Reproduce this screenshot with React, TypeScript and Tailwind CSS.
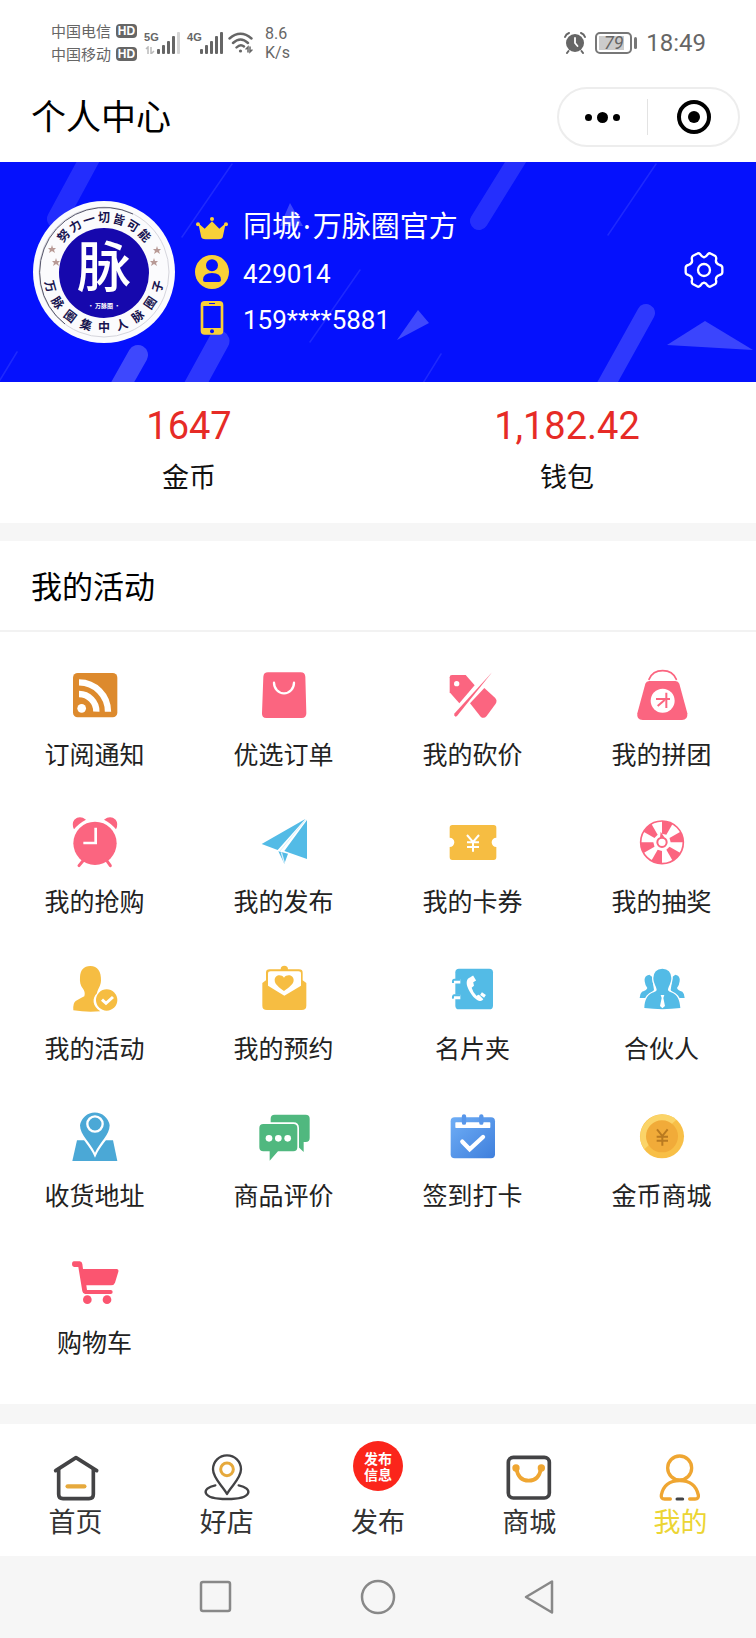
import type { ReactNode } from "react";

const PINK = "#fb6580";
const YELLOW = "#f6bd42";
const SKY = "#53bbe6";

type GlyphProps = { x: number; y: number; size?: number; children: ReactNode };

/* Icon canvas: three drawing units per pixel, with a free origin. */
function Glyph({ x, y, size = 56, children }: GlyphProps) {
  return (
    <svg width={size} height={size} viewBox={`${x} ${y} ${size * 3} ${size * 3}`} fill="none" aria-hidden="true" className="shrink-0">
      {children}
    </svg>
  );
}

function sector(cx: number, cy: number, r0: number, r1: number, a0: number, a1: number) {
  const p = (r: number, a: number) => {
    const t = (a * Math.PI) / 180;
    return `${(cx + r * Math.cos(t)).toFixed(1)} ${(cy + r * Math.sin(t)).toFixed(1)}`;
  };
  return `M${p(r0, a0)}L${p(r1, a0)}A${r1} ${r1} 0 0 1 ${p(r1, a1)}L${p(r0, a1)}Z`;
}

const RssIcon = (
  <Glyph x={200} y={51}>
    <rect x="218" y="69" width="133" height="133" rx="14" fill="#dd8a2d" />
    <circle cx="244" cy="175" r="13" fill="#fff" />
    <path d="M236 132A52 52 0 0 1 288 185M236 97A87 88 0 0 1 323 185" stroke="#fff" strokeWidth="19" />
  </Glyph>
);

const OrderIcon = (
  <Glyph x={766} y={51}>
    <path d="M802 67H900Q913 67 914 80L917 190Q917 204 903 204H797Q783 204 784 190L788 80Q789 67 802 67Z" fill={PINK} />
    <path d="M820 98A30 32 0 0 0 880 98" stroke="#fff" strokeWidth="7" strokeLinecap="round" />
  </Glyph>
);

const BargainIcon = (
  <Glyph x={200} y={51}>
    <path d="M214 82Q214 75 221 75H262L289 106L243 160L214 127Z" fill={PINK} />
    <circle cx="235" cy="101" r="8" fill="#fff" />
    <path d="M342 66L229 190Q225 198 232 200L236 198Z" fill={PINK} />
    <path d="M275 160L318 114L350 143Q358 151 352 161L325 198Q316 208 307 200Z" fill={PINK} />
  </Glyph>
);

const GroupIcon = (
  <Glyph x={766} y={51}>
    <path d="M811 88Q822 62 852 62Q882 62 893 88" stroke={PINK} strokeWidth="5" strokeLinecap="round" />
    <path d="M812 93H890Q899 93 902 101L926 190Q928 210 910 210H792Q773 210 776 190L800 101Q803 93 812 93Z" fill={PINK} />
    <circle cx="852" cy="152" r="36" fill="#fff" />
    <path d="M832 147H874M863 128V174M858 150L837 168" stroke={PINK} strokeWidth="6" />
  </Glyph>
);

const AlarmIcon = (
  <Glyph x={200} y={492}>
    <circle cx="284" cy="580" r="65" fill={PINK} />
    <path d="M221 538Q213 521 222 509Q238 495 257 509Q235 520 221 538ZM347 538Q355 521 346 509Q330 495 311 509Q333 520 347 538Z" fill={PINK} />
    <path d="M250 630L236 647M318 630L330 647" stroke={PINK} strokeWidth="9" strokeLinecap="round" />
    <path d="M286 533V579H249" stroke="#fff" strokeWidth="8" />
  </Glyph>
);

const PlaneIcon = (
  <Glyph x={766} y={492}>
    <path d="M783 582L914 507L831 600ZM919 510V627L851 603ZM833 604L862 611L851 641Z" fill={SKY} />
    <path d="M842 607L851 639" stroke="#d9f0fa" strokeWidth="4" />
    <path d="M915 509L838 603" stroke="#d9f0fa" strokeWidth="3" />
  </Glyph>
);

const CouponIcon = (
  <Glyph x={200} y={492}>
    <path d="M222 525H346Q354 525 354 533V563A14 14 0 0 0 354 591V621Q354 630 346 630H222Q214 630 214 621V591A14 14 0 0 0 214 563V533Q214 525 222 525Z" fill={YELLOW} />
    <path d="M266 555L284 576L302 555M284 576V605M266 577H302M266 591H302" stroke="#fff" strokeWidth="6" />
  </Glyph>
);

const WheelIcon = (
  <Glyph x={766} y={492}>
    <circle cx="850" cy="577" r="64" stroke={PINK} strokeWidth="5" />
    <g fill={PINK}>
      {[-120, -60, 0, 60, 120, 180].map((a) => (
        <path key={a} d={sector(850, 577, 26, 64, a - 30, a)} />
      ))}
    </g>
    <circle cx="850" cy="577" r="19" fill="#fff" />
    <path d="M846 545L858 563H844Z" fill={PINK} />
    <circle cx="850" cy="577" r="14" stroke={PINK} strokeWidth="6" />
  </Glyph>
);

const ActivityIcon = (
  <Glyph x={200} y={63}>
    <path
      d="M270 78C292 78 303 95 302 122C301 140 290 150 290 160C274 174 276 200 300 214Q260 218 219 211Q217 190 226 183Q240 175 252 169C255 158 252 152 248 146C240 138 238 125 239 112C240 90 250 78 270 78Z"
      fill={YELLOW}
    />
    <circle cx="319" cy="180" r="32" fill={YELLOW} />
    <path d="M305 179L317 190L338 171" stroke="#fff" strokeWidth="9" />
  </Glyph>
);

const ReserveIcon = (
  <Glyph x={766} y={63}>
    <circle cx="851" cy="88" r="11" fill={YELLOW} />
    <path d="M785 129L796 121V98Q796 88 807 88H895Q906 88 906 98V121L917 129V197Q917 210 903 210H799Q785 210 785 197Z" fill={YELLOW} />
    <path d="M802 101Q802 94 810 94H893Q901 94 901 101V137L851 167L802 137Z" fill="#fff" />
    <path d="M850 153C836 142 822 134 822 120C822 104 842 101 850 113C858 101 879 104 879 120C879 134 864 142 850 153Z" fill={YELLOW} />
  </Glyph>
);

const ContactsIcon = (
  <Glyph x={200} y={63}>
    <rect x="231" y="86" width="113" height="122" rx="11" fill={SKY} />
    <path d="M228 124H246M228 171H246" stroke="#fff" strokeWidth="13" />
    <path d="M246 119H227Q223 119 224 129M246 166H227Q223 166 224 176" stroke={SKY} strokeWidth="6" />
    <path d="M276 112C264 116 262 130 270 147C279 165 291 180 304 183Q311 184 315 178L302 164Q298 164 295 168Q284 158 280 143L287 137L282 115Z" fill="#fff" />
    <path d="M280 109L289 124M308 161L320 169" stroke="#fff" strokeWidth="10" />
  </Glyph>
);

const PartnerIcon = (
  <Glyph x={766} y={63}>
    <path d="M812 104Q796 106 798 124Q799 135 806 144Q803 152 790 155Q783 161 783 174H810L826 150L820 110ZM890 104Q905 106 903 124Q902 135 895 144Q898 152 911 155Q918 161 918 174H892L876 150L882 110Z" fill={SKY} />
    <path
      d="M851 86Q877 87 878 114C878 130 868 141 868 151C876 162 902 154 905 204Q851 211 797 204C800 154 826 162 834 151C834 141 824 130 824 114Q825 87 851 86Z"
      fill={SKY}
      stroke="#fff"
      strokeWidth="8"
      paintOrder="stroke"
    />
    <path d="M846 165H857L854 174L859 198L851 205L844 198L849 174Z" fill="#fff" />
  </Glyph>
);

const AddressIcon = (
  <Glyph x={200} y={504}>
    <path d="M230 601H338L351 663H216Z" fill="#4ba8d6" />
    <path d="M284 638C270 608 239 585 239 556A45 45 0 0 1 328 556C328 585 298 608 284 638Z" fill="#4ba8d6" stroke="#fff" strokeWidth="13" paintOrder="stroke" />
    <circle cx="284" cy="552" r="23" stroke="#fff" strokeWidth="7" />
  </Glyph>
);

const ReviewIcon = (
  <Glyph x={766} y={504}>
    <path d="M822 524H915Q927 524 927 536V594Q927 606 915 606H909V636L890 618V606H822Q810 606 810 594V536Q810 524 822 524Z" fill="#50b87f" />
    <path
      d="M788 552H878Q890 552 890 564V622Q890 634 878 634H832L807 662V634H788Q776 634 776 622V564Q776 552 788 552Z"
      fill="#50b87f"
      stroke="#fff"
      strokeWidth="10"
      paintOrder="stroke"
    />
    <circle cx="805" cy="595" r="10" fill="#fff" />
    <circle cx="833" cy="595" r="10" fill="#fff" />
    <circle cx="861" cy="595" r="10" fill="#fff" />
  </Glyph>
);

const CheckinIcon = (
  <Glyph x={200} y={504}>
    <defs>
      <linearGradient id="calendar" x1="0" y1="0" x2="1" y2="1">
        <stop offset="0" stopColor="#6faef6" />
        <stop offset="1" stopColor="#3f7fdc" />
      </linearGradient>
    </defs>
    <rect x="217" y="532" width="133" height="123" rx="12" fill="url(#calendar)" />
    <rect x="231" y="547" width="105" height="17" rx="2" fill="#fff" />
    <path d="M257 529V548M309 529V548" stroke="#5796ea" strokeWidth="13" strokeLinecap="round" />
    <path d="M252 605L274 628L314 591" stroke="#fff" strokeWidth="13" strokeLinecap="round" />
  </Glyph>
);

const CoinIcon = (
  <Glyph x={766} y={504}>
    <circle cx="850" cy="589" r="66" fill="#f8bf47" />
    <path d="M797 628A66 66 0 0 1 893 539Z" fill="#fbd468" />
    <circle cx="850" cy="589" r="48" fill="#f1ab39" />
    <path d="M835 568L851 588L867 568M851 588V617M834 590H868M834 602H868" stroke="#b97a20" strokeWidth="6" />
  </Glyph>
);

const CartIcon = (
  <Glyph x={200} y={75}>
    <path
      d="M221 94H238Q245 94 246 102L248 117H349Q356 118 354 125L344 158Q341 166 332 166H258L260 180H331Q337 180 337 186Q337 192 331 192H254Q248 192 246 184L234 111H221Q215 111 215 103Q215 94 221 94Z"
      fill="#fb5570"
    />
    <circle cx="261" cy="209" r="13" fill="#fb5570" />
    <circle cx="320" cy="209" r="13" fill="#fb5570" />
  </Glyph>
);

const features: { label: string; icon: ReactNode }[] = [
  { label: "订阅通知", icon: RssIcon },
  { label: "优选订单", icon: OrderIcon },
  { label: "我的砍价", icon: BargainIcon },
  { label: "我的拼团", icon: GroupIcon },
  { label: "我的抢购", icon: AlarmIcon },
  { label: "我的发布", icon: PlaneIcon },
  { label: "我的卡券", icon: CouponIcon },
  { label: "我的抽奖", icon: WheelIcon },
  { label: "我的活动", icon: ActivityIcon },
  { label: "我的预约", icon: ReserveIcon },
  { label: "名片夹", icon: ContactsIcon },
  { label: "合伙人", icon: PartnerIcon },
  { label: "收货地址", icon: AddressIcon },
  { label: "商品评价", icon: ReviewIcon },
  { label: "签到打卡", icon: CheckinIcon },
  { label: "金币商城", icon: CoinIcon },
  { label: "购物车", icon: CartIcon },
];

function Bars({ weak }: { weak?: boolean }) {
  return (
    <svg width="24" height="22" viewBox="0 0 24 22" fill="#666" aria-hidden="true">
      <rect x="0" y="17" width="3" height="5" rx="1" />
      <rect x="5" y="13" width="3" height="9" rx="1" />
      <rect x="10" y="9" width="3" height="13" rx="1" />
      <rect x="15" y="4" width="3" height="18" rx="1" />
      <rect x="20" y="0" width="3" height="22" rx="1" fill={weak ? "#d5d5d5" : "#666"} />
    </svg>
  );
}

function Carrier({ name }: { name: string }) {
  return (
    <div className="flex items-center gap-[5px]">
      <span>{name}</span>
      <span className="flex h-[14px] w-[21px] items-center justify-center rounded-[4px] bg-[#666] font-['Liberation_Sans',sans-serif] text-[12px] leading-none font-bold text-white">
        HD
      </span>
    </div>
  );
}

function StatusBar() {
  return (
    <div className="flex h-20 items-center justify-between pr-[50px] pl-[51px] text-[#666]">
      <div className="flex items-center pt-[6px]">
        <div className="pb-[2px] text-[15px] leading-[23px]">
          <Carrier name="中国电信" />
          <Carrier name="中国移动" />
        </div>
        <div className="ml-[7px] flex items-start">
          <div className="flex w-[13px] flex-col">
            <span className="font-['Liberation_Sans_Narrow','Liberation_Sans',sans-serif] text-[11px] leading-[11px] font-bold">5G</span>
            <svg width="12" height="8" viewBox="0 0 12 8" className="mt-[3px]" stroke="#bbb" strokeWidth="1.5" fill="none" aria-hidden="true">
              <path d="M2 3L4 1V8M10 5L7 8V1" />
            </svg>
          </div>
          <Bars weak />
        </div>
        <div className="ml-[6px] flex items-start">
          <span className="w-[13px] font-['Liberation_Sans_Narrow','Liberation_Sans',sans-serif] text-[11px] leading-[11px] font-bold">4G</span>
          <Bars />
        </div>
        <svg width="26" height="22" viewBox="0 0 26 22" className="ml-1" fill="none" stroke="#666" strokeWidth="2.4" strokeLinecap="round" aria-hidden="true">
          <path d="M1.5 6.5Q12.5 -3 23.5 6.5M5 11Q12.5 4 20 11M8.5 15.5Q12.5 11.5 16 14.5" />
          <circle cx="12.5" cy="19" r="1.6" fill="#666" stroke="none" />
          <path d="M18 17L20 15V20M24 18L22 20V15" strokeWidth="1.5" />
        </svg>
        <div className="ml-[11px] font-['Roboto',sans-serif] text-[16px] leading-[19px]">
          <div>8.6</div>
          <div>K/s</div>
        </div>
      </div>
      <div className="flex items-center pt-[6px]">
        <svg width="22" height="22" viewBox="0 0 22 22" fill="none" stroke="#666" strokeLinecap="round" aria-hidden="true">
          <circle cx="11" cy="11" r="9" fill="#666" stroke="none" />
          <path d="M1 5Q2 2 5 1M21 5Q20 2 17 1" strokeWidth="2" />
          <path d="M4.5 19L3 21M17.5 19L19 21" strokeWidth="2" />
          <path d="M11 6V11L13.5 14" stroke="#fff" strokeWidth="1.8" />
        </svg>
        <div className="ml-[9px] flex h-[22px] w-[37px] rounded-[5px] border-2 border-[#777] p-[2px]">
          <div className="flex w-[25px] shrink-0 items-center justify-center bg-[#ccc] font-['Roboto',sans-serif] text-[18px] leading-none italic">
            <span className="pl-1">79</span>
          </div>
        </div>
        <span className="ml-[2px] h-3 w-[3px] rounded-full bg-[#777]" />
        <span className="ml-[9px] font-['Roboto',sans-serif] text-[24px] leading-none">18:49</span>
      </div>
    </div>
  );
}

function TitleBar() {
  return (
    <header className="flex h-[82px] items-center justify-between pr-4 pb-2 pl-[31px]">
      <h1 className="pb-1 text-[35px] leading-[44px]">个人中心</h1>
      <div className="flex h-[60px] w-[183px] items-center rounded-full border-2 border-[#ededed]">
        <button type="button" aria-label="更多" className="flex flex-1 items-center justify-center gap-[5px]">
          <span className="size-[7px] rounded-full bg-black" />
          <span className="size-[11px] rounded-full bg-black" />
          <span className="size-[7px] rounded-full bg-black" />
        </button>
        <span className="h-9 w-px bg-[#e3e3e3]" />
        <button type="button" aria-label="关闭" className="flex flex-1 items-center justify-center pl-[3px]">
          <span className="flex size-[34px] items-center justify-center rounded-full border-4 border-black">
            <span className="size-3 rounded-full bg-black" />
          </span>
        </button>
      </div>
    </header>
  );
}

const STAR = "M0 -4L1 -1H4L2 1L3 4L0 2L-3 4L-2 1L-4 -1H-1Z";

function Avatar() {
  return (
    <svg viewBox="0 0 142 142" className="size-[142px] shrink-0" role="img" aria-label="万脉圈">
      <circle cx="71" cy="71" r="71" fill="#fbfbfd" />
      <circle cx="71" cy="71" r="65" fill="none" stroke="#d5d5dc" strokeWidth="1" />
      <path d="M32 123A65 65 0 0 1 100 13" fill="none" stroke="#55556a" strokeWidth="1" />
      <circle cx="71" cy="72" r="45" fill="#1608ad" />
      <g fill="#17134f" fontSize="12" fontWeight="700" textAnchor="middle">
        {Array.from("努力一切皆可能").map((c, i) => (
          <text key={i} x="71" y="21" transform={`rotate(${(i - 3) * 16} 71 71)`}>
            {c}
          </text>
        ))}
        {Array.from("万脉圈集中人脉圈子").map((c, i) => (
          <text key={i} x="71" y="131" transform={`rotate(${(4 - i) * 18.75} 71 71)`}>
            {c}
          </text>
        ))}
      </g>
      <g fill="#b89a96">
        <path d={STAR} transform="translate(19 48)" />
        <path d={STAR} transform="translate(23 61)" />
        <path d={STAR} transform="translate(124 49)" />
        <path d={STAR} transform="translate(121 61)" />
      </g>
      <text x="71" y="86" fill="#fff" fontSize="54" fontWeight="500" textAnchor="middle">
        脉
      </text>
      <text x="71" y="107" fill="#fff" fontSize="6" fontWeight="700" textAnchor="middle">
        · 万脉圈 ·
      </text>
    </svg>
  );
}

function BannerArt() {
  return (
    <svg viewBox="0 0 756 220" preserveAspectRatio="xMidYMid slice" className="absolute inset-0 size-full" aria-hidden="true">
      <g stroke="#fff" strokeLinecap="round" fill="none">
        <path d="M90 -4L57 57" strokeWidth="20" opacity=".12" />
        <path d="M138 193L116 232" strokeWidth="20" opacity=".23" />
        <path d="M219 179L190 232" strokeWidth="21" opacity=".16" />
        <path d="M523 -12L479 59" strokeWidth="18" opacity=".13" />
        <path d="M646 151L601 232" strokeWidth="18" opacity=".17" />
        <g strokeWidth="1.5" opacity=".1">
          <path d="M232 2L182 75M656 2L608 73M360 108L310 180M441 192L420 226M17 190L0 218" />
        </g>
      </g>
      <g fill="#fff">
        <path d="M705 159L667 183L753 188Z" opacity=".22" />
        <path d="M418 148L429 161L397 178Z" opacity=".24" />
        <path d="M290 41L303 64H280Z" opacity=".22" />
      </g>
    </svg>
  );
}

function Profile() {
  return (
    <section className="relative h-[220px] bg-[#0511fd] text-white">
      <BannerArt />
      <div className="relative flex h-full items-center pr-8 pl-[33px]">
        <Avatar />
        <div className="ml-5 flex flex-1 flex-col gap-[2px] pb-[2px]">
          <div className="flex h-[46px] items-center gap-[14px]">
            <svg width="34" height="30" viewBox="0 -18 102 90" fill="#f9d038" aria-hidden="true">
              <path d="M10 22L29 38L51 16L73 38L92 22L84 60Q83 70 70 70H32Q19 70 18 60Z" />
              <circle cx="51" cy="9" r="6" />
              <circle cx="9" cy="25" r="6" />
              <circle cx="93" cy="25" r="6" />
            </svg>
            <h2 className="text-[29px] leading-[46px]">
              同城<span className="px-[2px] font-['Noto_Sans',sans-serif]">·</span>万脉圈官方
            </h2>
          </div>
          <div className="flex h-11 items-center gap-[14px]">
            <svg width="34" height="34" viewBox="0 0 102 102" aria-hidden="true">
              <circle cx="51" cy="51" r="51" fill="#f9d038" />
              <path d="M51 13A18 18 0 0 1 51 49A18 18 0 0 1 51 13ZM24 75Q24 54 51 54Q78 54 78 75Q78 81 71 81H31Q24 81 24 75Z" fill="#0511fd" />
            </svg>
            <span className="pt-1 font-['Roboto',sans-serif] text-[26px] leading-[40px]">429014</span>
          </div>
          <div className="flex h-11 items-center gap-[14px]">
            <svg width="34" height="34" viewBox="0 0 102 102" aria-hidden="true">
              <rect x="17" y="0" width="68" height="101" rx="12" fill="#f9d038" />
              <rect x="25" y="15" width="52" height="66" fill="#0511fd" />
              <rect x="42" y="6" width="18" height="3" rx="1" fill="#0511fd" />
              <circle cx="51" cy="91" r="6" fill="#0511fd" />
            </svg>
            <span className="pt-1 font-['Roboto',sans-serif] text-[26px] leading-[40px]">159****5881</span>
          </div>
        </div>
        <button type="button" aria-label="设置" className="mb-1">
          <svg width="40" height="38" viewBox="0 0 120 114" fill="none" stroke="#fff" strokeWidth="7" strokeLinejoin="round" aria-hidden="true">
            <path d="M60 19Q66 18 71 10Q76 5 81 8L94 15Q98 19 96 27Q94 38 107 42Q115 44 115 50V64Q115 70 107 72Q94 76 96 87Q98 95 94 99L81 106Q76 109 71 104Q66 96 60 95Q54 96 49 104Q44 109 39 106L26 99Q22 95 24 87Q26 76 13 72Q5 70 5 64V50Q5 44 13 42Q26 38 24 27Q22 19 26 15L39 8Q44 5 49 10Q54 18 60 19Z" />
            <circle cx="60" cy="57" r="18" />
          </svg>
        </button>
      </div>
    </section>
  );
}

function Balance({ value, label }: { value: string; label: string }) {
  return (
    <a href="#balance" className="flex flex-col items-center">
      <span className="font-['Roboto',sans-serif] text-[38px] leading-[52px] text-[#e62b26]">{value}</span>
      <span className="mt-[5px] text-[27px] leading-[38px] text-[#111]">{label}</span>
    </a>
  );
}

function Tab({ label, icon, active, raised }: { label: string; icon: ReactNode; active?: boolean; raised?: boolean }) {
  return (
    <a
      href="#tab"
      aria-current={active ? "page" : undefined}
      className={`flex flex-1 flex-col items-center justify-end pb-[17px] ${raised ? "gap-3" : "gap-px"} ${active ? "text-[#ecd533]" : "text-[#333]"}`}
    >
      {icon}
      <span className="text-[27px] leading-[36px]">{label}</span>
    </a>
  );
}

const HomeIcon = (
  <Glyph x={155} y={163} size={48}>
    <g stroke="#434345" strokeWidth="11" strokeLinecap="round" strokeLinejoin="round">
      <path d="M166 213L227 174L289 213" />
      <path d="M175 210V284Q175 297 188 297H266Q279 297 279 284V210" />
    </g>
    <path d="M202 260H252" stroke="#e6a93c" strokeWidth="13" strokeLinecap="round" />
  </Glyph>
);

const ShopIcon = (
  <Glyph x={609} y={163} size={48}>
    <g stroke="#434345" strokeWidth="7" strokeLinecap="round" strokeLinejoin="round">
      <path d="M681 283C668 258 639 237 639 209A42 42 0 0 1 723 209C723 237 694 258 681 283Z" />
      <path d="M646 257C603 265 602 298 681 298C760 298 759 265 716 257" />
    </g>
    <circle cx="681" cy="209" r="19" stroke="#e6a93c" strokeWidth="9" />
  </Glyph>
);

const MallIcon = (
  <Glyph x={382} y={163} size={48}>
    <rect x="392" y="173" width="123" height="122" rx="15" stroke="#434345" strokeWidth="11" />
    <path d="M416 206Q422 243 453 243Q484 243 490 206" stroke="#efa632" strokeWidth="11" />
    <circle cx="415" cy="205" r="11" fill="#efa632" />
    <circle cx="491" cy="205" r="11" fill="#efa632" />
  </Glyph>
);

const MineIcon = (
  <Glyph x={835} y={163} size={48}>
    <g stroke="#efa632" strokeWidth="10" strokeLinecap="round">
      <circle cx="906" cy="205" r="36" />
      <path d="M878 298H861Q849 298 851 286Q860 243 906 243Q952 243 962 286Q964 298 952 298H936" />
    </g>
    <path d="M898 298H915" stroke="#434345" strokeWidth="9" strokeLinecap="round" />
  </Glyph>
);

const PublishIcon = (
  <span className="flex size-[50px] items-center justify-center rounded-full bg-[#fb251b] text-[14px] leading-[16px] font-bold text-white">
    <span className="w-7">发布信息</span>
  </span>
);

export default function App() {
  return (
    <div className="flex min-h-screen flex-col bg-white font-['Noto_Sans_CJK_SC',sans-serif] text-black">
      <StatusBar />
      <TitleBar />
      <main>
        <Profile />
        <section className="grid grid-cols-2 pt-[18px] pb-7">
          <Balance value="1647" label="金币" />
          <Balance value="1,182.42" label="钱包" />
        </section>
        <div className="h-[18px] bg-[#f6f6f6]" />
        <section>
          <h2 className="border-b-2 border-[#f2f2f2] pt-[21px] pb-[23px] pl-[31px] text-[31px] leading-[45px]">我的活动</h2>
          <nav className="grid grid-cols-4 gap-y-[43px] pt-[35px] pb-[45px]" aria-label="我的活动">
            {features.map((f) => (
              <a key={f.label} href="#feature" className="flex flex-col items-center gap-3 text-[#222]">
                {f.icon}
                <span className="text-[25px] leading-[36px]">{f.label}</span>
              </a>
            ))}
          </nav>
        </section>
        <div className="h-5 bg-[#f6f6f6]" />
      </main>
      <nav className="flex h-[132px]" aria-label="主导航">
        <Tab label="首页" icon={HomeIcon} />
        <Tab label="好店" icon={ShopIcon} />
        <Tab label="发布" icon={PublishIcon} raised />
        <Tab label="商城" icon={MallIcon} />
        <Tab label="我的" icon={MineIcon} active />
      </nav>
      <div className="flex h-[82px] items-center justify-center gap-[126px] bg-[#f6f6f6]">
        <button type="button" aria-label="最近任务">
          <svg width="36" height="36" viewBox="0 0 36 36" fill="none" stroke="#888" strokeWidth="2.5" aria-hidden="true">
            <rect x="3" y="3" width="29" height="29" rx="2" />
          </svg>
        </button>
        <button type="button" aria-label="主屏幕">
          <svg width="36" height="36" viewBox="0 0 36 36" fill="none" stroke="#888" strokeWidth="2.5" aria-hidden="true">
            <circle cx="18" cy="18" r="16" />
          </svg>
        </button>
        <button type="button" aria-label="返回">
          <svg width="36" height="36" viewBox="0 0 36 36" fill="none" stroke="#888" strokeWidth="2.5" strokeLinejoin="round" aria-hidden="true">
            <path d="M4 18L30 2.500V33.500Z" />
          </svg>
        </button>
      </div>
    </div>
  );
}
